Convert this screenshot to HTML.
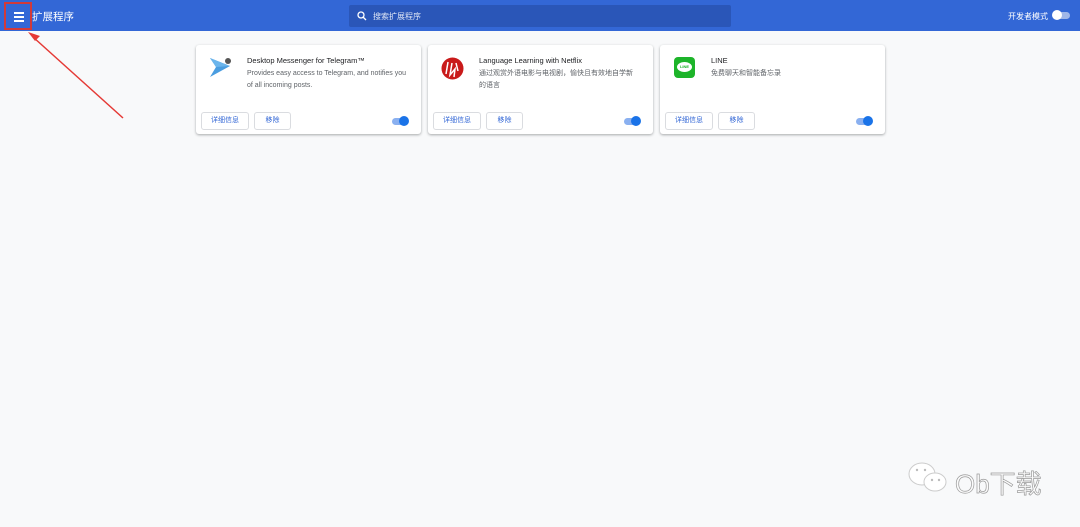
<!DOCTYPE html>
<html><head><meta charset="utf-8"><style>
*{margin:0;padding:0;box-sizing:border-box}
body{width:1080px;height:527px;background:#f8f9fa;font-family:"Liberation Sans","Noto Sans CJK SC",sans-serif;position:relative;overflow:hidden}
.hdr{position:absolute;left:0;top:0;width:1080px;height:31px;background:#3367d6}
.title{position:absolute;left:32px;top:9px;color:#fff;font-size:10.5px}
.menu{position:absolute;left:4px;top:2px;width:28px;height:28px;border:2px solid #d23a3a}
.menu i{position:absolute;left:8px;width:10px;height:1.5px;background:#fff}
.search{position:absolute;left:349px;top:5px;width:382px;height:22px;background:#2a56b8;border-radius:2px}
.search span{position:absolute;left:24px;top:6px;color:#dfe6f5;font-size:8px}
.dev{position:absolute;left:1008px;top:11px;color:#fff;font-size:8px}
.tg{position:absolute;left:1054px;top:12px;width:16px;height:7px;border-radius:4px;background:#9fb6e8}
.tg:after{content:"";position:absolute;left:-2px;top:-2px;width:10px;height:10px;border-radius:50%;background:#fff}
.card{position:absolute;top:45px;width:225px;height:89px;background:#fff;border-radius:3px;box-shadow:0 1px 2px rgba(60,64,67,.3),0 1px 3px rgba(60,64,67,.15)}
.nm{position:absolute;left:51px;top:11px;font-size:7.5px;color:#202124}
.ds{position:absolute;left:51px;top:23px;font-size:7px;color:#5f6368;line-height:12px;width:163px}
.b{position:absolute;top:67px;height:18px;border:1px solid #dadce0;border-radius:3px;color:#3367d6;font-size:7px;text-align:center;line-height:16px}
.sw{position:absolute;left:196px;top:73px;width:16px;height:7px;border-radius:4px;background:#8ab0f0}
.sw:after{content:"";position:absolute;left:7px;top:-2px;width:10px;height:10px;border-radius:50%;background:#1a73e8}
.wm{position:absolute;left:955px;top:464px;font-size:26px;color:#fbfbfb;-webkit-text-stroke:0.7px #9a9a9a;letter-spacing:0px}
</style></head><body>
<div class="hdr">
<div class="menu"><i style="top:8px"></i><i style="top:12px"></i><i style="top:16px"></i></div>
<div class="title">扩展程序</div>
<div class="search"><svg style="position:absolute;left:8px;top:6px" width="10" height="10" viewBox="0 0 10 10"><circle cx="4" cy="4" r="3" fill="none" stroke="#fff" stroke-width="1.3"/><path d="M6 6l3 3" stroke="#fff" stroke-width="1.3"/></svg><span>搜索扩展程序</span></div>
<div class="dev">开发者模式</div><div class="tg"></div>
</div>
<svg style="position:absolute;left:0;top:0" width="140" height="130"><path d="M123 118L33 37" stroke="#e53935" stroke-width="1.5"/><path d="M28 32l12 4-5 5z" fill="#e53935"/></svg>
<div class="card" style="left:196px">
<svg style="position:absolute;left:14px;top:12px" width="24" height="22"><path d="M0 1L20 9L0 20L6 10Z" fill="#4a9de0"/><path d="M0 1L20 9L6 10Z" fill="#6bb5ec"/><circle cx="18" cy="4" r="3" fill="#555"/></svg>
<div class="nm">Desktop Messenger for Telegram™</div>
<div class="ds">Provides easy access to Telegram, and notifies you of all incoming posts.</div>
<div class="b" style="left:5px;width:48px">详细信息</div><div class="b" style="left:58px;width:37px">移除</div><div class="sw"></div></div>
<div class="card" style="left:428px">
<svg style="position:absolute;left:13px;top:12px" width="23" height="23"><circle cx="11.5" cy="11.5" r="11" fill="#c91a1a"/><path d="M7 5l-2 12M11 6l-2 12l5-6l-1 8M15 6l2 8" stroke="#fff" stroke-width="1.5" fill="none"/></svg>
<div class="nm">Language Learning with Netflix</div>
<div class="ds" style="width:156px">通过观赏外语电影与电视剧，愉快且有效地自学新的语言</div>
<div class="b" style="left:5px;width:48px">详细信息</div><div class="b" style="left:58px;width:37px">移除</div><div class="sw"></div></div>
<div class="card" style="left:660px">
<div style="position:absolute;left:14px;top:12px;width:21px;height:21px;background:#1db42a;border-radius:4px"><div style="position:absolute;left:3px;top:5px;width:15px;height:10px;background:#fff;border-radius:50%;font-size:4px;color:#1db42a;text-align:center;line-height:10px;font-weight:bold">LINE</div></div>
<div class="nm">LINE</div>
<div class="ds">免费聊天和智能备忘录</div>
<div class="b" style="left:5px;width:48px">详细信息</div><div class="b" style="left:58px;width:37px">移除</div><div class="sw"></div></div>
<svg style="position:absolute;left:905px;top:460px" width="50" height="36"><ellipse cx="17" cy="14" rx="13" ry="11" fill="#fff" stroke="#ccc"/><ellipse cx="30" cy="22" rx="11" ry="9" fill="#fff" stroke="#ccc"/><circle cx="12" cy="10" r="1.2" fill="#bbb"/><circle cx="20" cy="10" r="1.2" fill="#bbb"/><circle cx="27" cy="20" r="1.2" fill="#bbb"/><circle cx="34" cy="20" r="1.2" fill="#bbb"/></svg>
<div class="wm">Ob下载</div>
</body></html>
